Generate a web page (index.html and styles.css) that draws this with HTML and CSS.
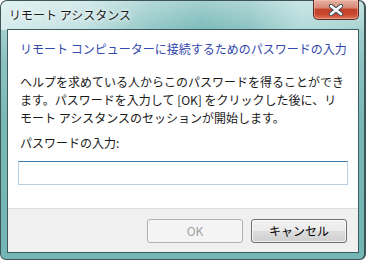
FILE: index.html
```html
<!DOCTYPE html>
<html lang="ja">
<head>
<meta charset="utf-8">
<link rel="stylesheet" href="styles.css">
</head>
<body>
<div class="window">
  <div class="titlebar">
    <span class="title">リモート アシスタンス</span>
    <div class="close">
      <svg width="16" height="12" viewBox="0 0 16 12"><path d="M3 2 L13 10 M13 2 L3 10" stroke="#3a4a5a" stroke-width="4.2" stroke-linecap="round"/><path d="M3 2 L13 10 M13 2 L3 10" stroke="#ffffff" stroke-width="2.4" stroke-linecap="round"/></svg>
    </div>
  </div>
  <div class="client">
    <div class="content">
      <div class="heading">リモート コンピューターに接続するためのパスワードの入力</div>
      <p class="desc">ヘルプを求めている人からこのパスワードを得ることができ<br>ます。パスワードを入力して [OK] をクリックした後に、リ<br>モート アシスタンスのセッションが開始します。</p>
      <div class="label">パスワードの入力:</div>
      <div class="input"></div>
    </div>
    <div class="footer">
      <div class="btn disabled">OK</div>
      <div class="btn">キャンセル</div>
    </div>
  </div>
</div>
</body>
</html>
```

FILE: styles.css
```css
html, body {
  margin: 0;
  padding: 0;
  background: #ffffff;
}
body {
  font-family: "Noto Sans CJK JP", "Noto Sans", sans-serif;
  font-size: 12px;
}
.window {
  width: 366px;
  height: 260px;
  box-sizing: border-box;
  border: 1px solid #3e5457;
  border-right-width: 2px;
  border-radius: 7px 7px 6px 6px;
  padding: 0 5px 6px 6px;
  display: flex;
  flex-direction: column;
  background:
    linear-gradient(to bottom, rgba(255,255,255,0.3), rgba(255,255,255,0) 28px) no-repeat,
    linear-gradient(to right, #d6ecec 0px, #c4e2e2 80px, #94c9c8 150px, #7dbcbb 200px, #8ec5c4 250px, #b4dbdb 300px, #a9d4d3 366px) 0 0 / 100% 29px no-repeat,
    linear-gradient(to bottom, #b8dcdb 0px, #8cc3c2 60px, #78b8b7 120px, #74b6b5 260px);
}
.titlebar {
  height: 28px;
  display: flex;
  justify-content: space-between;
  align-items: flex-start;
}
.title {
  padding-left: 2px;
  margin-top: 5px;
  line-height: 18px;
  color: #1a1a1a;
  text-shadow: 0 0 6px #ffffff, 0 0 3px #ffffff;
}
.close {
  width: 46px;
  height: 20px;
  margin-top: -1px;
  box-sizing: border-box;
  border: 1px solid #5e2a20;
  border-top: none;
  border-radius: 0 0 5px 5px;
  background: linear-gradient(to bottom, #e6b3a6 0%, #d98a76 40%, #c2432a 50%, #c9462c 75%, #dc7a5e 100%);
  box-shadow: inset 0 0 0 1px rgba(255,200,190,0.45);
  display: flex;
  align-items: center;
  justify-content: center;
}
.close svg {
  display: block;
}
.client {
  flex: 1;
  border: 1px solid #3d5a5c;
  background: #ffffff;
  display: flex;
  flex-direction: column;
}
.content {
  flex: 1;
  padding: 10px 10px 0 10px;
}
.heading {
  padding-left: 2px;
  line-height: 18px;
  color: #3348ab;
  white-space: nowrap;
}
.desc {
  margin: 15px 0 0 0;
  padding-left: 2px;
  line-height: 18px;
  color: #1a1a1a;
  white-space: nowrap;
}
.label {
  margin-top: 7px;
  padding-left: 2px;
  line-height: 18px;
  color: #1a1a1a;
}
.input {
  margin-top: 9px;
  width: 330px;
  height: 24px;
  box-sizing: border-box;
  border: 1px solid #b7d0e6;
  border-top-color: #3d7bb1;
  background: #ffffff;
}
.footer {
  height: 44px;
  box-sizing: border-box;
  border-top: 1px solid #dfdfdf;
  background: #f0f0f0;
  display: flex;
  justify-content: flex-end;
  align-items: flex-start;
  gap: 8px;
  padding: 10px 11px 0 0;
}
.btn {
  width: 96px;
  height: 24px;
  box-sizing: border-box;
  border: 1px solid #707070;
  border-radius: 3px;
  background: linear-gradient(to bottom, #f2f2f2 0%, #ebebeb 50%, #dddddd 51%, #cfcfcf 100%);
  box-shadow: inset 0 0 0 1px rgba(255,255,255,0.7);
  display: flex;
  align-items: center;
  justify-content: center;
  color: #000000;
  line-height: 16px;
}
.btn.disabled {
  border-color: #adb2b5;
  background: #f4f4f4;
  box-shadow: none;
  color: #a0a0a0;
}
```
